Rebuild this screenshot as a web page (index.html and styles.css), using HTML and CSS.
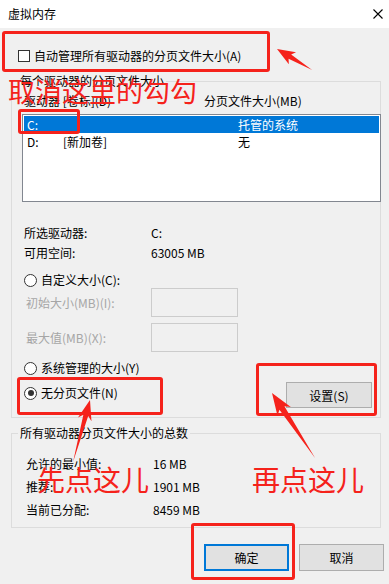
FILE: index.html
```html
<!DOCTYPE html>
<html>
<head>
  <meta charset="UTF-8">
  <title>虚拟内存</title>
  <link rel="stylesheet" href="styles.css">
</head>
<body>
  <div class="window">
    <div class="titlebar">
      <span>虚拟内存</span>
      <svg class="close" width="10" height="10" viewBox="0 0 10 10">
        <path d="M0.5 0.5 L9.5 9.5 M9.5 0.5 L0.5 9.5" stroke="#000" stroke-width="1.1" fill="none"/>
      </svg>
    </div>

    <div class="content">
      <div class="check-row"><span class="checkbox"></span>自动管理所有驱动器的分页文件大小(A)</div>

      <fieldset class="group group-drives">
        <legend>每个驱动器的分页文件大小</legend>
        <div class="list-head"><span>驱动器 [卷标](D)</span><span>分页文件大小(MB)</span></div>
        <div class="drive-list">
          <div class="drive selected"><span>C:</span><span></span><span>托管的系统</span></div>
          <div class="drive"><span>D:</span><span>[新加卷]</span><span>无</span></div>
        </div>

        <div class="info">
          <span>所选驱动器:</span><span>C:</span>
          <span>可用空间:</span><span>63005 MB</span>
        </div>

        <div class="radio-row custom"><span class="radio"></span>自定义大小(C):</div>
        <div class="size-row first"><span>初始大小(MB)(I):</span><span class="field"></span></div>
        <div class="size-row"><span>最大值(MB)(X):</span><span class="field"></span></div>

        <div class="radio-row system"><span class="radio"></span>系统管理的大小(Y)</div>
        <div class="last-row">
          <div class="radio-row none"><span class="radio checked"></span>无分页文件(N)</div>
          <button class="btn set-btn">设置(S)</button>
        </div>
      </fieldset>

      <fieldset class="group group-total">
        <legend>所有驱动器分页文件大小的总数</legend>
        <div class="totals">
          <span>允许的最小值:</span><span>16 MB</span>
          <span>推荐:</span><span>1901 MB</span>
          <span>当前已分配:</span><span>8459 MB</span>
        </div>
      </fieldset>

      <div class="buttons">
        <button class="btn ok">确定</button>
        <button class="btn">取消</button>
      </div>
    </div>

    <!-- red annotations drawn over the dialog -->
    <div class="mark mark-auto"></div>
    <div class="mark mark-c"></div>
    <div class="mark mark-none"></div>
    <div class="mark mark-set"></div>
    <div class="mark mark-ok"></div>
    <div class="note note-uncheck">取消这里的勾勾</div>
    <div class="note note-first">先点这儿</div>
    <div class="note note-then">再点这儿</div>
    <svg class="arrows" width="389" height="584" viewBox="0 0 389 584">
      <g fill="#f5221b">
        <polygon transform="translate(277 49) rotate(31)" points="0,0 18,-7 15,-2.5 41,0 15,2.5 18,7"/>
        <polygon transform="translate(90 400) rotate(105.3)" points="0,0 20,-7 16,-2.5 64,0 16,2.5 20,7"/>
        <polygon transform="translate(272 393) rotate(56.5)" points="0,0 22,-8 18,-3 78,0 18,3 22,8"/>
      </g>
    </svg>
  </div>
</body>
</html>
```

FILE: styles.css
```css
html, body {
  margin: 0;
  padding: 0;
}
body {
  font-family: "Noto Sans CJK SC", "Noto Sans", sans-serif;
  font-size: 12px;
  line-height: 16px;
  color: #000;
}
.window {
  position: relative;
  width: 389px;
  height: 584px;
  background: #f0f0f0;
  overflow: hidden;
}
.titlebar {
  height: 28px;
  background: #fff;
  display: flex;
  align-items: center;
  justify-content: space-between;
  padding: 0 6px 0 8px;
}
.close {
  margin-top: -1px;
}
.content {
  padding: 0 8px 0 11px;
}

.check-row {
  margin-top: 20px;
  padding-left: 7px;
  display: flex;
  align-items: center;
  height: 16px;
}
.checkbox {
  width: 10px;
  height: 10px;
  border: 1px solid #333;
  background: #fff;
  margin-right: 4px;
}

.group {
  margin: 0;
  border: 1px solid #dcdcdc;
  padding: 0 0 0 10px;
  min-width: 0;
}
.group legend {
  padding: 0 2px;
  margin-left: -4px;
  line-height: 16px;
}
.group-drives {
  margin-top: 9px;
  padding-bottom: 9px;
}
.group-total {
  margin-top: 7px;
  padding-bottom: 6px;
}

.list-head {
  margin-top: 4px;
  padding-left: 2px;
  display: grid;
  grid-template-columns: 180px auto;
}
.drive-list {
  margin-top: 5px;
  margin-right: -1px;
  height: 88px;
  box-sizing: border-box;
  border: 1px solid #828790;
  background: #fff;
  padding: 1px;
}
.drive {
  display: grid;
  grid-template-columns: 36px 175px auto;
  height: 17px;
  line-height: 17px;
  padding-left: 3px;
}
.drive.selected {
  background: #0078d7;
  color: #fff;
}

.info {
  margin-top: 21px;
  padding-left: 2px;
  display: grid;
  grid-template-columns: 127px auto;
  line-height: 20px;
}

.radio-row {
  display: flex;
  align-items: center;
  height: 16px;
  padding-left: 2px;
}
.radio {
  width: 11px;
  height: 11px;
  border: 1px solid #333;
  border-radius: 50%;
  background: #fff;
  margin-right: 4px;
  display: flex;
  align-items: center;
  justify-content: center;
}
.radio.checked::after {
  content: "";
  width: 6px;
  height: 6px;
  border-radius: 50%;
  background: #333;
}
.custom {
  margin-top: 9px;
}
.system {
  margin-top: 8px;
}

.size-row {
  display: grid;
  grid-template-columns: 125px 87px;
  align-items: center;
  padding-left: 4px;
  color: #a6a6a6;
  margin-top: 6px;
}
.size-row.first {
  margin-top: 0;
}
.field {
  height: 29px;
  box-sizing: border-box;
  border: 1px solid #cccccc;
}

.last-row {
  margin-top: 6px;
  display: flex;
  justify-content: space-between;
  align-items: flex-start;
}
.last-row .radio-row {
  margin-top: 3px;
}

.btn {
  font-family: inherit;
  font-size: 12px;
  color: #000;
  background: #e1e1e1;
  border: 1px solid #adadad;
  width: 86px;
  height: 26px;
  padding: 0;
}
.set-btn {
  margin-right: 8px;
}

.totals {
  margin-top: 11px;
  padding-left: 4px;
  display: grid;
  grid-template-columns: 127px auto;
  line-height: 23px;
}

.buttons {
  margin-top: 16px;
  display: flex;
  justify-content: flex-end;
  gap: 10px;
  padding-right: -2px;
  margin-right: -3px;
}
.buttons .btn {
  width: 85px;
  height: 27px;
}
.buttons .ok {
  border: 2px solid #0078d7;
}

/* annotations */
.mark {
  position: absolute;
  border: 3px solid #f5221b;
  border-radius: 3px;
  box-sizing: border-box;
}
.mark-auto { left: 2px; top: 31px; width: 268px; height: 41px; }
.mark-c { left: 18px; top: 109px; width: 62px; height: 25px; }
.mark-none { left: 17px; top: 377px; width: 146px; height: 38px; }
.mark-set { left: 256px; top: 363px; width: 121px; height: 53px; }
.mark-ok { left: 191px; top: 523px; width: 104px; height: 57px; }

.note {
  position: absolute;
  color: #f5221b;
  font-size: 27px;
  line-height: 27px;
  white-space: nowrap;
}
.note-uncheck { left: 8px; top: 77px; }
.note-first { left: 37px; top: 465px; font-size: 28px; line-height: 28px; }
.note-then { left: 252px; top: 465px; font-size: 28px; line-height: 28px; }

.arrows {
  position: absolute;
  left: 0;
  top: 0;
  pointer-events: none;
}
```
